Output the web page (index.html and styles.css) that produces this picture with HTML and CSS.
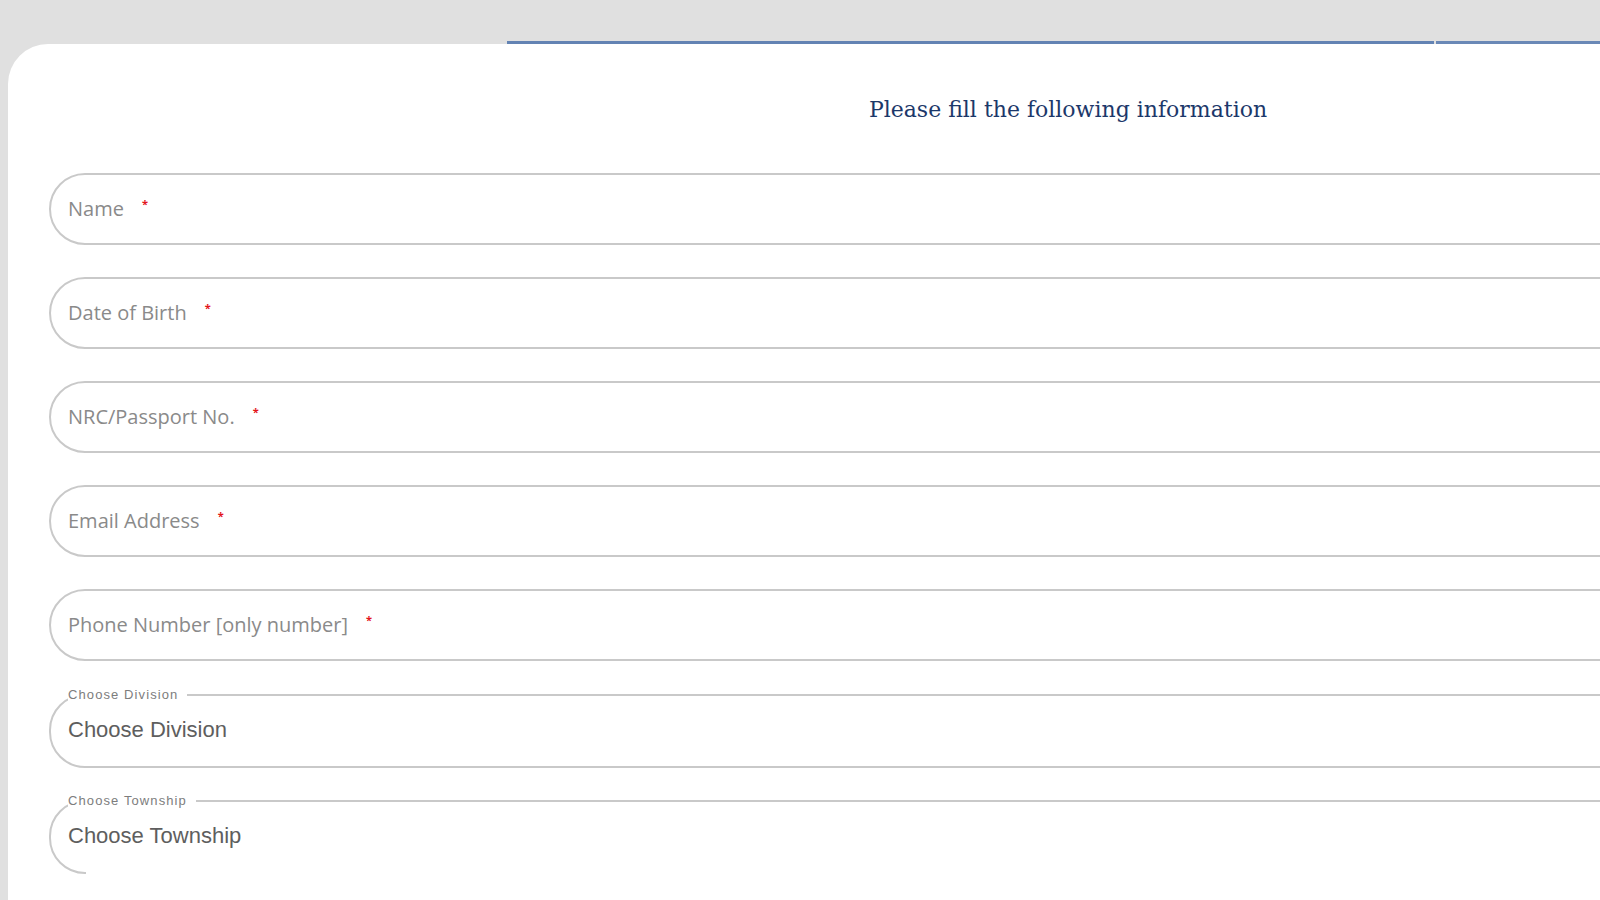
FILE: index.html
```html
<!DOCTYPE html>
<html lang="en">
<head>
<meta charset="utf-8">
<title>Registration form</title>
<link rel="stylesheet" href="styles.css">
</head>
<body>
<div class="page">
  <div class="tabs">
    <div class="tab-spacer"></div>
    <div class="tab tab-active"></div>
    <div class="tab tab-next"></div>
  </div>
  <main class="card">
    <h1 class="title">Please fill the following information</h1>
    <form class="form">
      <label class="field">
        <span class="ph">Name</span><span class="req">*</span>
        <input class="field-input" type="text" name="name">
      </label>
      <label class="field">
        <span class="ph">Date of Birth</span><span class="req">*</span>
        <input class="field-input" type="text" name="dob">
      </label>
      <label class="field">
        <span class="ph">NRC/Passport No.</span><span class="req">*</span>
        <input class="field-input" type="text" name="nrc">
      </label>
      <label class="field">
        <span class="ph">Email Address</span><span class="req">*</span>
        <input class="field-input" type="text" name="email">
      </label>
      <label class="field">
        <span class="ph">Phone Number [only number]</span><span class="req">*</span>
        <input class="field-input" type="text" name="phone">
      </label>
      <fieldset class="select-field">
        <legend class="select-legend">Choose Division</legend>
        <select class="select-input" name="division">
          <option>Choose Division</option>
        </select>
      </fieldset>
      <fieldset class="select-field select-open">
        <legend class="select-legend">Choose Township</legend>
        <select class="select-input" name="township">
          <option>Choose Township</option>
        </select>
      </fieldset>
    </form>
  </main>
</div>
</body>
</html>
```

FILE: styles.css
```css
html, body {
  margin: 0;
  padding: 0;
  overflow: hidden;
  background: #e0e0e0;
}

.page {
  width: 2200px;
  height: 900px;
  padding-left: 8px;
}

.tabs {
  display: flex;
  align-items: flex-end;
  height: 44px;
}

.tab-spacer {
  width: 499px;
  flex: none;
}

.tab {
  height: 3px;
}

.tab-active {
  width: 927px;
  background: #6383b3;
}

.tab-next {
  flex: 1;
  margin-left: 2px;
  background: #6a88b6;
}

.card {
  width: 2120px;
  min-height: 900px;
  background: #ffffff;
  border-top-left-radius: 40px;
  padding: 0 41px;
  box-sizing: border-box;
}

.title {
  margin: 0;
  padding-top: 51px;
  line-height: 30px;
  text-align: center;
  font-family: "DejaVu Serif", "Liberation Serif", serif;
  font-weight: normal;
  font-size: 22px;
  color: #1c386a;
}

.form {
  display: flex;
  flex-direction: column;
  margin-top: 48px;
}

.field {
  display: flex;
  align-items: center;
  height: 72px;
  box-sizing: border-box;
  border: 2px solid #c9c9c9;
  border-radius: 36px;
  padding-left: 17px;
  padding-bottom: 2px;
  margin-bottom: 32px;
  font-family: "Open Sans", sans-serif;
}

.ph {
  font-size: 20px;
  color: #8a8a8a;
  white-space: nowrap;
}

.req {
  font-size: 11px;
  font-weight: bold;
  color: #e3141b;
  margin-left: 18px;
  align-self: center;
  position: relative;
  top: -5px;
}

.field-input {
  flex: 1;
  height: 100%;
  border: none;
  outline: none;
  background: transparent;
  font-family: "Open Sans", sans-serif;
  font-size: 20px;
}

.select-field {
  position: relative;
  margin: -6px 0 0 0;
  padding: 0 17px 10px 17px;
  border: 2px solid #c9c9c9;
  border-radius: 36px;
  min-width: 0;
}

.select-field + .select-field {
  margin-top: 25px;
}

.select-legend {
  padding: 0 9px 0 0;
  font-family: "Liberation Sans", Arial, sans-serif;
  font-size: 13px;
  line-height: 15px;
  letter-spacing: 1.1px;
  color: #7d7d7d;
}

.select-input {
  display: block;
  width: 100%;
  height: 54px;
  margin: 0;
  padding: 0;
  border: none;
  outline: none;
  background: transparent;
  appearance: none;
  -webkit-appearance: none;
  font-family: "Liberation Sans", Arial, sans-serif;
  font-size: 22px;
  color: #5e5e5e;
}

.select-open::after {
  content: "";
  position: absolute;
  left: 35px;
  right: -4px;
  bottom: -3px;
  height: 4px;
  background: #ffffff;
}
```
